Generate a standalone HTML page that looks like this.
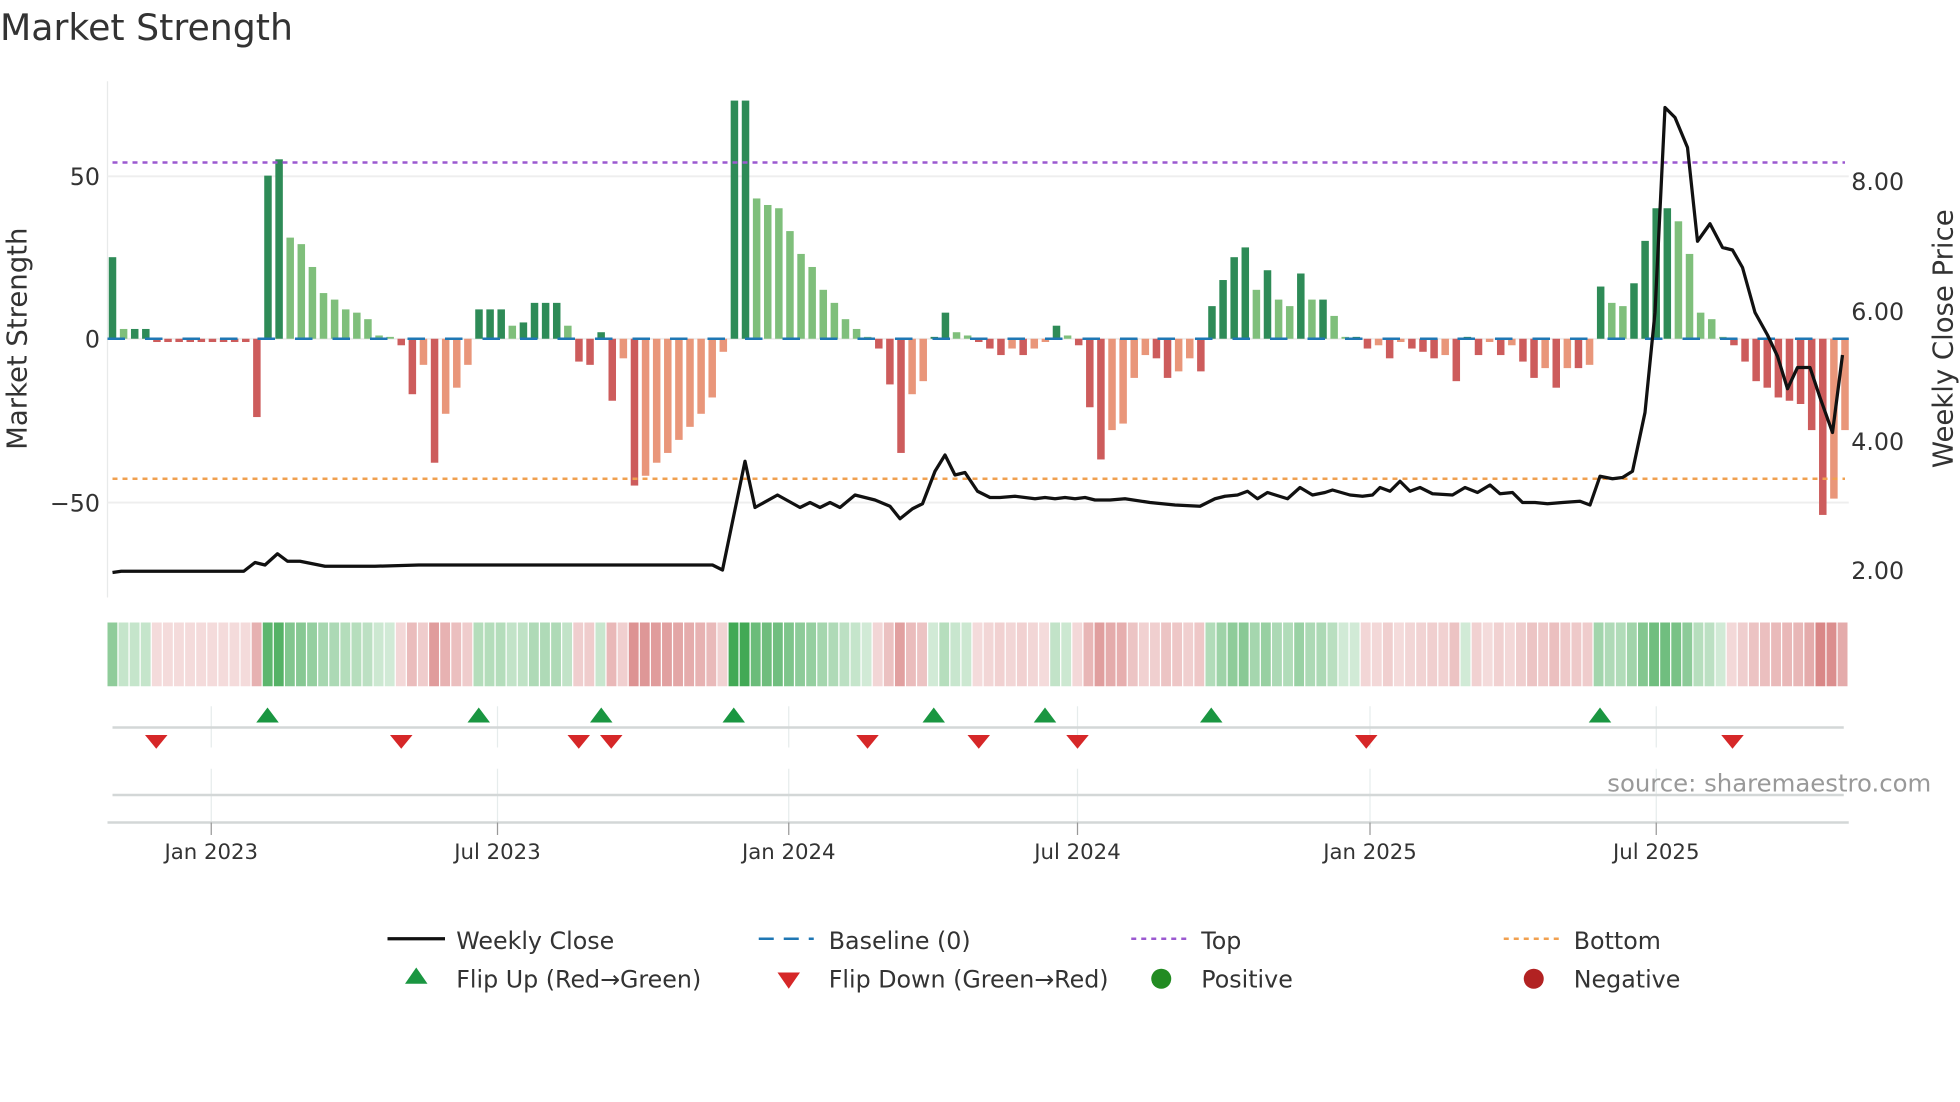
<!DOCTYPE html>
<html><head><meta charset="utf-8"><style>
html,body{margin:0;padding:0;background:#fff;}
svg{display:block;font-family:"DejaVu Sans","Liberation Sans",sans-serif;}
</style></head><body>
<svg id="s" width="1960" height="1102" viewBox="0 0 1568 881.6" xmlns="http://www.w3.org/2000/svg">
<rect width="1568" height="882" fill="#fff"/>
<text x="0" y="32" font-size="29" fill="#333">Market Strength</text>
<line x1="86" y1="65" x2="86" y2="478" stroke="#e8eaea" stroke-width="1"/>
<line x1="86" y1="141" x2="1479" y2="141" stroke="#eeeeee" stroke-width="1.5"/>
<line x1="86" y1="271" x2="1479" y2="271" stroke="#eeeeee" stroke-width="1.5"/>
<line x1="86" y1="402" x2="1479" y2="402" stroke="#eeeeee" stroke-width="1.5"/>
<g font-size="19" fill="#333" text-anchor="end">
<text x="80" y="148">50</text><text x="80" y="278">0</text><text x="80" y="409">−50</text>
</g>
<g font-size="19" fill="#333">
<text x="1481" y="152">8.00</text><text x="1481" y="256">6.00</text><text x="1481" y="360">4.00</text><text x="1481" y="463">2.00</text>
</g>
<text transform="translate(21,271) rotate(-90)" font-size="22" fill="#333" text-anchor="middle">Market Strength</text>
<text transform="translate(1562,271) rotate(-90)" font-size="22" fill="#333" text-anchor="middle">Weekly Close Price</text>
<g id="bars"></g>
<line x1="86" y1="271" x2="1479" y2="271" stroke="#1f77b4" stroke-width="2" stroke-dasharray="14,16"/>
<line x1="90" y1="130" x2="1476" y2="130" stroke="#9b59d0" stroke-width="2" stroke-dasharray="4,4"/>
<line x1="90" y1="383" x2="1476" y2="383" stroke="#f0a050" stroke-width="2" stroke-dasharray="4,4"/>
<polyline id="price" fill="none" stroke="#111" stroke-width="2.6" stroke-linejoin="round"/>
<g id="heat"></g>
<g stroke="#e6ecec" stroke-width="1">
<line x1="169" y1="565" x2="169" y2="598"/><line x1="398" y1="565" x2="398" y2="598"/><line x1="631" y1="565" x2="631" y2="598"/><line x1="862" y1="565" x2="862" y2="598"/><line x1="1096" y1="565" x2="1096" y2="598"/><line x1="1325" y1="565" x2="1325" y2="598"/>
<line x1="169" y1="615" x2="169" y2="660"/><line x1="398" y1="615" x2="398" y2="660"/><line x1="631" y1="615" x2="631" y2="660"/><line x1="862" y1="615" x2="862" y2="660"/><line x1="1096" y1="615" x2="1096" y2="660"/><line x1="1325" y1="615" x2="1325" y2="660"/>
</g>
<line x1="90" y1="582" x2="1475" y2="582" stroke="#d3d7d7" stroke-width="2"/>
<line x1="90" y1="636" x2="1475" y2="636" stroke="#d3d7d7" stroke-width="2"/>
<line x1="86" y1="658" x2="1479" y2="658" stroke="#d3d7d7" stroke-width="2"/>
<g id="ev"></g>
<g stroke="#999" stroke-width="1">
<line x1="169" y1="658" x2="169" y2="668"/><line x1="398" y1="658" x2="398" y2="668"/><line x1="631" y1="658" x2="631" y2="668"/><line x1="862" y1="658" x2="862" y2="668"/><line x1="1096" y1="658" x2="1096" y2="668"/><line x1="1325" y1="658" x2="1325" y2="668"/>
</g>
<g font-size="17" fill="#333" text-anchor="middle">
<text x="169" y="687">Jan 2023</text><text x="398" y="687">Jul 2023</text><text x="631" y="687">Jan 2024</text><text x="862" y="687">Jul 2024</text><text x="1096" y="687">Jan 2025</text><text x="1325" y="687">Jul 2025</text>
</g>
<text x="1545" y="633" font-size="19.5" fill="#999" text-anchor="end">source: sharemaestro.com</text>
<g font-size="19" fill="#333">
<line x1="310" y1="751" x2="356" y2="751" stroke="#111" stroke-width="2.6"/>
<text x="365" y="759">Weekly Close</text>
<line x1="607" y1="751" x2="651" y2="751" stroke="#1f77b4" stroke-width="2" stroke-dasharray="12,8"/>
<text x="663" y="759">Baseline (0)</text>
<line x1="905" y1="751" x2="949" y2="751" stroke="#9b59d0" stroke-width="2" stroke-dasharray="4,4"/>
<text x="961" y="759">Top</text>
<line x1="1203" y1="751" x2="1247" y2="751" stroke="#f0a050" stroke-width="2" stroke-dasharray="4,4"/>
<text x="1259" y="759">Bottom</text>
<polygon points="333,774 324,787 342,787" fill="#1a9641"/>
<text x="365" y="790">Flip Up (Red→Green)</text>
<polygon points="622,778 640,778 631,791" fill="#d62728"/>
<text x="663" y="790">Flip Down (Green→Red)</text>
<circle cx="929" cy="783" r="8" fill="#228b22"/>
<text x="961" y="790">Positive</text>
<circle cx="1227" cy="783" r="8" fill="#b22222"/>
<text x="1259" y="790">Negative</text>
</g>
</svg>
<script>
var NS="http://www.w3.org/2000/svg";
function el(t,a,p){var e=document.createElementNS(NS,t);for(var k in a)e.setAttribute(k,a[k]);p.appendChild(e);return e;}
var v=[25,3,3,3,-1,-1,-1,-1,-1,-1,-1,-1,-1,-24,50,55,31,29,22,14,12,9,8,6,1,0,-2,-17,-8,-38,-23,-15,-8,9,9,9,4,5,11,11,11,4,-7,-8,2,-19,-6,-45,-42,-38,-35,-31,-27,-23,-18,-4,73,73,43,41,40,33,26,22,15,11,6,3,0,-3,-14,-35,-17,-13,0,8,2,1,-1,-3,-5,-3,-5,-3,-1,4,1,-2,-21,-37,-28,-26,-12,-5,-6,-12,-10,-6,-10,10,18,25,28,15,21,12,10,20,12,12,7,0,0,-3,-2,-6,-1,-3,-4,-6,-5,-13,0,-5,-1,-5,-2,-7,-12,-9,-15,-9,-9,-8,16,11,10,17,30,40,40,36,26,8,6,0,-2,-7,-13,-15,-18,-19,-20,-28,-54,-49,-28];
var n=v.length,x0=90,x1=1476,dx=(x1-x0)/(n-1),k=2.61;
var bars=document.getElementById('bars'),heat=document.getElementById('heat');
for(var i=0;i<n;i++){
 var x=x0+i*dx,val=v[i],p=i?v[i-1]:0,c;
 if(val>=0)c=(val>=p)?'#2e8b57':'#7fbf7b';else c=(val<=p)?'#cd5c5c':'#e9967a';
 var h=Math.abs(val)*k; if(h<1.5)h=1.5;
 el('rect',{x:x-3,y:val>=0?271-h:271,width:6,height:h,fill:c},bars);
 var a=0.22+0.68*Math.pow(Math.min(Math.abs(val)/65,1),0.8);
 var hc=val>0?'rgba(46,160,67,'+a+')':'rgba(200,80,80,'+(a*0.85)+')';
 if(val==0)hc='rgba(46,160,67,0.22)';
 var hx=86+i*(1393/n);
 el('rect',{x:hx,y:498,width:1393/n-1,height:51,fill:hc},heat);
}
var pts=[[90,458],[97,457],[195,457],[204,450],[212,452],[222,443],[230,449],[240,449],[260,453],[300,453],[335,452],[570,452],[578,456],[596,369],[604,406],[622,396],[640,406],[648,402],[656,406],[664,402],[672,406],[684,396],[700,400],[712,405],[720,415],[730,407],[738,403],[748,377],[756,364],[764,380],[772,378],[782,393],[792,398],[800,398],[812,397],[828,399],[836,398],[844,399],[852,398],[860,399],[868,398],[876,400],[888,400],[900,399],[920,402],[940,404],[960,405],[972,399],[980,397],[990,396],[998,393],[1006,399],[1014,394],[1030,399],[1040,390],[1050,396],[1060,394],[1066,392],[1080,396],[1090,397],[1098,396],[1104,390],[1112,393],[1120,385],[1128,393],[1136,390],[1146,395],[1162,396],[1172,390],[1182,394],[1192,388],[1200,395],[1210,394],[1218,402],[1228,402],[1238,403],[1250,402],[1264,401],[1272,404],[1280,381],[1290,383],[1298,382],[1306,377],[1316,330],[1324,250],[1332,86],[1340,94],[1350,118],[1358,193],[1368,179],[1378,198],[1386,200],[1394,214],[1404,250],[1414,268],[1422,285],[1430,311],[1438,294],[1448,294],[1456,318],[1466,346],[1474,284]];
document.getElementById('price').setAttribute('points',pts.map(function(p){return p.join(',')}).join(' '));
var ev=document.getElementById('ev');
[214,383,481,587,747,836,969,1280].forEach(function(x){el('polygon',{points:x+',566 '+(x-9)+',578 '+(x+9)+',578',fill:'#1a9641'},ev);});
[125,321,463,489,694,783,862,1093,1386].forEach(function(x){el('polygon',{points:(x-9)+',588 '+(x+9)+',588 '+x+',599',fill:'#d62728'},ev);});
</script>
</body></html>
